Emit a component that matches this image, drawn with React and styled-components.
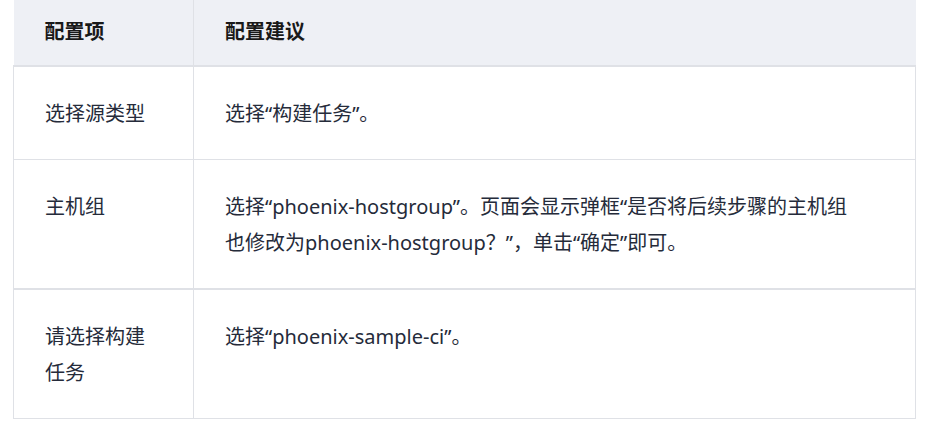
import React from "react";
import styled, { createGlobalStyle } from "styled-components";

const Global = createGlobalStyle`
  html, body { margin: 0; padding: 0; background: #ffffff; }
  body { font-family: "Noto Sans", "Noto Sans CJK SC", sans-serif; }
`;

const Page = styled.div`
  padding: 0 11px 0 13px;
`;

const Table = styled.table`
  width: 903px;
  border-collapse: collapse;
  table-layout: fixed;
  font-size: 20px;
  line-height: 36px;
  color: #252b3a;
`;

const HeadCell = styled.th`
  background: #eef0f5;
  text-align: left;
  font-weight: 700;
  color: #191919;
  padding: 14px 31px 15px 31px;
  border-bottom: 2px solid #dfe1e6;
  border-left: ${(p) => (p.$first ? "none" : "1px solid #dfe1e6")};
`;

const Row = styled.tr`
  border-bottom: ${(p) => (p.$thick ? "2px" : "1px")} solid #dfe1e6;
`;

const Cell = styled.td`
  vertical-align: top;
  padding: 29px ${(p) => (p.$wide ? "56px" : "31px")} 27px 31px;
  border-left: 1px solid #dfe1e6;
  border-right: 1px solid #dfe1e6;
`;

const rows = [
  ["选择源类型", "选择“构建任务”。"],
  [
    "主机组",
    "选择“phoenix-hostgroup”。页面会显示弹框“是否将后续步骤的主机组也修改为phoenix-hostgroup？”，单击“确定”即可。",
  ],
  ["请选择构建任务", "选择“phoenix-sample-ci”。"],
];

export default function App() {
  return (
    <Page>
      <Global />
      <Table>
        <colgroup>
          <col style={{ width: 180 }} />
          <col />
        </colgroup>
        <thead>
          <tr>
            <HeadCell $first>配置项</HeadCell>
            <HeadCell>配置建议</HeadCell>
          </tr>
        </thead>
        <tbody>
          {rows.map(([a, b], i) => (
            <Row key={i} $thick={i === 1}>
              <Cell>{a}</Cell>
              <Cell $wide>{b}</Cell>
            </Row>
          ))}
        </tbody>
      </Table>
    </Page>
  );
}
